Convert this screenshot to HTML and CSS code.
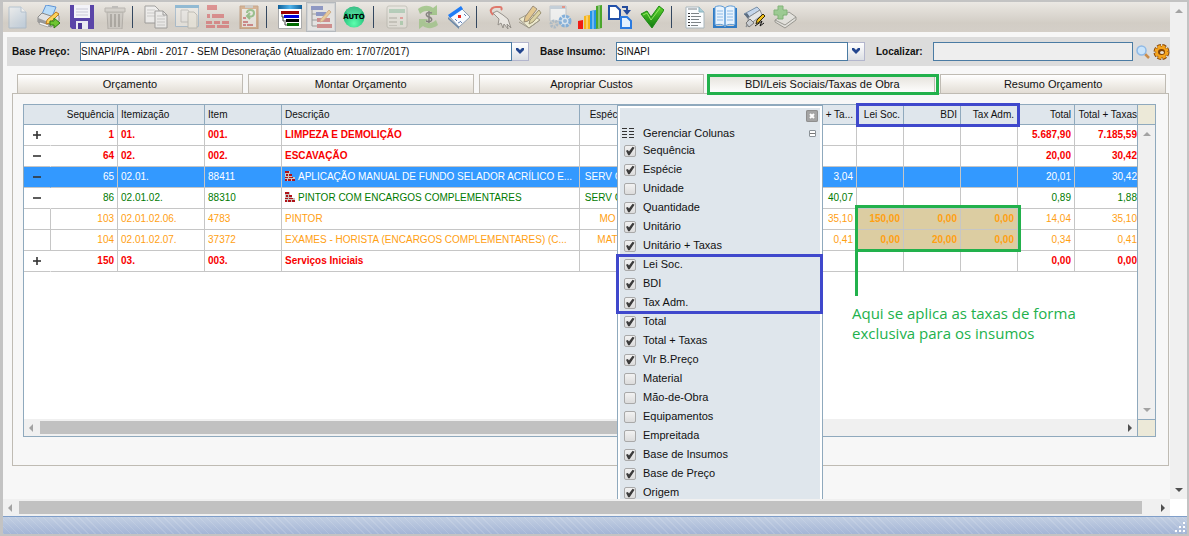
FILE: index.html
```html
<!DOCTYPE html>
<html lang="pt-BR">
<head>
<meta charset="utf-8">
<title>Orçamento - BDI/Leis Sociais/Taxas de Obra</title>
<link rel="stylesheet" href="styles.css">
</head>
<body>
<svg class="defs" width="0" height="0" aria-hidden="true">
  <defs>
    <linearGradient id="gPage" x1="0" y1="0" x2="1" y2="1"><stop offset="0" stop-color="#f2f7fc"/><stop offset="1" stop-color="#a9c8ea"/></linearGradient>
    <radialGradient id="gAuto" cx=".5" cy=".8" r=".7"><stop offset="0" stop-color="#5dffae"/><stop offset="1" stop-color="#16ad6c"/></radialGradient>
    <linearGradient id="gCheck" x1="0" y1="0" x2="0" y2="1"><stop offset="0" stop-color="#5fd52c"/><stop offset="1" stop-color="#0f7a10"/></linearGradient>
    <linearGradient id="gSky" x1="0" y1="0" x2="1" y2="0"><stop offset="0" stop-color="#0f5f97"/><stop offset=".5" stop-color="#52b5ec"/><stop offset="1" stop-color="#0f5f97"/></linearGradient>
    <symbol id="bricks" viewBox="0 0 10 10">
      <path fill="#c9c3c0" d="M0 0h5v3h2v3h3v4H0z"/>
      <path fill="#b01218" d="M0 0h4v2H0zM1 3h2v2H1zM4 3h3v2H4zM0 6h3v1H0zM4 6h4v1H4zM0 8h2v2H0zM3 8h3v2H3zM7 8h3v2H7z"/>
    </symbol>
  </defs>
</svg>
<div class="window">
  <div class="viewport">
    <main class="page">
      <div class="toolbar" role="toolbar" aria-label="Ferramentas">
        <div class="tool-group">
          <button class="tool faded" aria-label="Novo"><svg viewBox="0 0 24 24"><path d="M3 2h12l5 5v16H3z" fill="url(#gPage)" stroke="#8aa9c6"/><path d="M15 2v5h5" fill="#fff" stroke="#8aa9c6"/></svg></button>
          <button class="tool" aria-label="Imprimir"><svg viewBox="0 0 24 24"><path d="M9 0l10 2-4 10-10-3z" fill="#b9dcf8" stroke="#5f95d6"/><path d="M1 12l4-4 12 4 3-3 2 2v5l-8 6L1 17z" fill="#e2e2e2" stroke="#8a8a8a"/><path d="M1 13l13 5v4L1 17z" fill="#9b9b9b"/><path d="M3 17l9 3-1 2-9-3z" fill="#f5f5f5" stroke="#777" stroke-width=".5"/><path d="M19 7l3 2-9 9-4 1 1-4z" fill="#fbd35c" stroke="#c07a1d"/><path d="M13 16h4v-3l6 5-6 5v-3h-4z" fill="#6ec531" stroke="#2f7d12"/></svg></button>
          <button class="tool wide" aria-label="Salvar"><svg viewBox="0 0 24 24"><path d="M0 0h24v24H2l-2-2z" fill="#5a45a8"/><path d="M4 0h16v13H4z" fill="#f3f3f8"/><path d="M6 4h12M6 7h12M6 10h12" stroke="#c9c9d6"/><path d="M6 16h12v8H6z" fill="#e9e9f2"/><path d="M8 18h4v6H8z" fill="#4a3697"/></svg></button>
          <button class="tool faded" aria-label="Excluir"><svg viewBox="0 0 24 24"><path d="M4 7h16l-1 17H5z" fill="#c3c0bb" stroke="#908d88"/><path d="M8 9v13M12 9v13M16 9v13" stroke="#84817c" stroke-width="2"/><path d="M2 3h20v4H2z" fill="#c8c5c0" stroke="#908d88"/><path d="M9 1h6v2H9z" fill="#999"/></svg></button>
        </div>
        <span class="sep"></span>
        <div class="tool-group">
          <button class="tool soft" aria-label="Copiar"><svg viewBox="0 0 24 24"><path d="M1 1h10l4 4v13H1z" fill="#f2f2f2" stroke="#8b8b8b"/><path d="M3 5h8M3 8h9M3 11h9" stroke="#c5c5c5"/><path d="M11 6h8l4 4v13H11z" fill="#f0f0f0" stroke="#8b8b8b"/><path d="M13 11h8M13 14h8M13 17h8M13 20h8" stroke="#c2c2c2"/><path d="M19 6v4h4" fill="none" stroke="#888"/></svg></button>
          <button class="tool faded" aria-label="Janela"><svg viewBox="0 0 24 24"><path d="M.5.5h23v21H.5z" fill="#f1f0ec" stroke="#7fa6c8"/><path d="M0 0h24v3H0z" fill="#3f93cb"/><path d="M6 5h7l2 3v9H6z" fill="#eee" stroke="#aaa"/><path d="M13 7h6l3 3v13h-9z" fill="#f1efe4" stroke="#a3a39b"/></svg></button>
          <button class="tool faded" aria-label="Composição"><svg viewBox="0 0 24 24"><path d="M1 0h10v5H1zM1 9h3v4H1zM6 9h12v4H6zM0 16h6v3H0zM8 16h6v3H8zM16 16h7v3h-7zM0 20h9v3H0zM11 20h12v3H11z" fill="#d4474c"/></svg></button>
          <button class="tool faded" aria-label="Colar"><svg viewBox="0 0 24 24"><path d="M3 1h18v23H3z" fill="#c98953" stroke="#a46a3c"/><path d="M5 4h14v18H5z" fill="#f4f2ec"/><path d="M8 0h8v3H8z" fill="#b9b9b9"/><path d="M10 8c0-4 7-4 7 0s-4 4-6 3M13 8l-3 3 3 3" fill="none" stroke="#58a74a" stroke-width="2"/><path d="M6 12h3v2H6zM6 16h5v2H6zM6 19h3v2H6zM10 19h6v2h-6z" fill="#c34349"/></svg></button>
        </div>
        <span class="sep"></span>
        <div class="tool-group">
          <button class="tool" aria-label="Árvore"><svg viewBox="0 0 24 24"><path d="M.5 2h23v21.500H.5z" fill="#fff" stroke="#aaa"/><path d="M0 0h24v4H0z" fill="url(#gSky)"/><path d="M3 6h18v3H3z" fill="#9b0000"/><path d="M6 10h15v3H6z" fill="#0002d8"/><path d="M8 14h13v3H8z" fill="#000"/><path d="M9 18h12v3H9z" fill="#006b00"/><path d="M4 9v3h2M5 12v4h3M7 17v3h2" fill="none" stroke="#444"/></svg></button>
          <button class="tool pressed" aria-label="Editar itens"><svg class="faded-art" viewBox="0 0 24 24"><path d="M2 1h12v4H2z" fill="#3b50a8"/><path d="M7 7h10v4H7z" fill="#3b50a8"/><path d="M8 13h13v4H8zM8 19h15v4H8z" fill="#ba3d3d"/><path d="M3 5v16h5M3 9h4M3 15h5" fill="none" stroke="#555"/><path d="M20 5l2 2-8 9-3 1 1-3z" fill="#f0b659" stroke="#bd7d39"/></svg></button>
          <button class="tool wide" aria-label="Automático"><svg viewBox="0 0 24 24"><circle cx="12" cy="12" r="10.500" fill="url(#gAuto)"/><ellipse cx="12" cy="6" rx="8" ry="4" fill="#8cf3c5" opacity=".35"/></svg><span class="auto">AUTO</span></button>
        </div>
        <span class="sep"></span>
        <div class="tool-group">
          <button class="tool faded" aria-label="Calculadora"><svg viewBox="0 0 24 24"><rect x="2" y="1" width="20" height="22" rx="2" fill="#e8e8e1" stroke="#a8a89e"/><path d="M4 4h16v4H4z" fill="#8cbf9f"/><path d="M4 12h8v2H4zM4 16h8v2H4zM4 20h8v1H4z" fill="#b6b6ad"/><path d="M15 12h3v2h-3z" fill="#e36c6c"/><path d="M15 16h3v4h-3z" fill="#8fc79a"/></svg></button>
          <button class="tool faded" aria-label="Valores"><svg viewBox="0 0 24 24"><path d="M2 4c5-4 11-4 15-1l4-3v10H12l3-3C11 5 7 6 4 9z" fill="#6fb24e"/><path d="M22 20c-5 4-11 4-15 1l-4 3V14h9l-3 3c4 2 8 1 11-2z" fill="#80bc62"/><path d="M16 8c-7-2-7 3-3 4s4 6-3 4M13 6v12" fill="none" stroke="#333" stroke-width="1.500"/></svg></button>
          <button class="tool" aria-label="Calendário"><svg viewBox="0 0 24 24"><path d="M2 11L14 3l9 9-11 10z" fill="#f8fbff" stroke="#8f9fb3"/><path d="M1 10L14 1l2 3L3 13z" fill="#1f7cf6"/><path d="M1 12l11 10v2L1 14z" fill="#6987a8"/><path d="M11 10h3v3h-3z" fill="#ec2720"/><path d="M8 14l2 2M13 16l2 2M17 9l2 2M11 18l2-1" stroke="#6380b5"/></svg></button>
        </div>
        <span class="sep"></span>
        <div class="tool-group tight">
          <button class="tool soft" aria-label="Selecionar"><svg viewBox="0 0 24 24"><path d="M5 8l4-2 6 4 5 4 3 9-4-4 1 5-4-5-1 4-2-5-3 2 1-6z" fill="#f0eeea" stroke="#817d77"/><path d="M5 10L3 7c-1-3 2-5 5-5h4c2 0 2 2 1 3" fill="none" stroke="#dd5648" stroke-width="2"/></svg></button>
          <button class="tool soft" aria-label="Anotar"><svg viewBox="0 0 24 24"><path d="M1 14l11-6 10 7-11 8z" fill="#f4f1cf" stroke="#8e8a75"/><path d="M1 17l10 6 11-8" fill="none" stroke="#8e8a75"/><path d="M15 1l4 3-9 12-4 1 1-5z" fill="#e5c27a" stroke="#84735a"/><path d="M21 5l2 3-8 9-4 2 1-4z" fill="#ded397" stroke="#867b52"/></svg></button>
          <button class="tool soft" aria-label="Configurar"><svg viewBox="0 0 24 24"><path d="M2 1h16v15H2z" fill="#f4f6f7" stroke="#b6bdc4"/><path d="M2 1h16v3H2z" fill="#bac9d7"/><path d="M14 1h3v2h-3z" fill="#e27b6b"/><circle cx="17" cy="16" r="5" fill="#dcebf9" stroke="#68a4de" stroke-width="3" stroke-dasharray="3 1"/><circle cx="17" cy="16" r="2" fill="#7aaee0"/><circle cx="6" cy="19" r="3" fill="none" stroke="#9fb3c4" stroke-width="3" stroke-dasharray="2 1"/></svg></button>
          <button class="tool" aria-label="Gráfico"><svg viewBox="0 0 24 24"><path d="M0 16l5-1v9H0z" fill="#f01c13"/><path d="M6 11l6-1v14H6z" fill="#f7b51a"/><path d="M12 6l6-1v19h-6z" fill="#2594e8"/><path d="M18 1l6-1v23l-6 1z" fill="#4ba62c"/><path d="M8 11h2v13H8zM14 6h2v18h-2zM20 1h2v22h-2z" fill="#fff" opacity=".35"/></svg></button>
          <button class="tool" aria-label="Transferir"><svg viewBox="0 0 24 24"><path d="M1 1h7l4 4v9H1z" fill="#fff" stroke="#2150a9" stroke-width="2"/><path d="M13 12h6l4 4v7H13z" fill="#e4f1ff" stroke="#2b7be0" stroke-width="2"/><path d="M14 2h5v4" fill="none" stroke="#254c9c" stroke-width="2"/><path d="M15 5h8l-4 5z" fill="#254c9c"/></svg></button>
          <button class="tool wide" aria-label="Confirmar"><svg viewBox="0 0 24 24"><path d="M1 9l6-3 4 6 8-11 5 4-12 18z" fill="url(#gCheck)" stroke="#1d8b14"/><path d="M3 10l4-2 4 7 9-12" fill="none" stroke="#8fe75f"/></svg></button>
        </div>
        <span class="sep"></span>
        <div class="tool-group tight">
          <button class="tool" aria-label="Relatório"><svg viewBox="0 0 24 24"><path d="M3 2h13l5 5v16H3z" fill="#fbfdff" stroke="#a9b6bd"/><path d="M5 4h9M8 8.500h8M8 11.500h10M8 14.500h8M8 17.500h10M8 20.500h7" stroke="#7d8488"/><path d="M5 8.500h2M5 11.500h2M5 14.500h2M5 17.500h2M5 20.500h2" stroke="#333"/><path d="M16 2v5h5" fill="#a6cdd8" stroke="#8ab1bc"/></svg></button>
          <button class="tool" aria-label="Livro"><svg viewBox="0 0 24 24"><path d="M0 3h3v18h8l1 1 1-1h8V3h3v20H0z" fill="#2f7bc5"/><path d="M2 2c4-2 8-1 10 1v18c-3-2-6-2-10-1zM22 2c-4-2-8-1-10 1v18c3-2 6-2 10-1z" fill="#e8f3fd" stroke="#5b9ad7"/><path d="M4 6h6M4 9h6M4 12h6M4 15h6M14 6h6M14 9h6M14 12h6M14 15h6" stroke="#8dbbe8"/></svg></button>
          <button class="tool" aria-label="Assinar"><svg viewBox="0 0 24 24"><path d="M1 9L14 2l3 3L6 12z" fill="#c4d6ec" stroke="#7890a8"/><path d="M1 9l3-1 3 4-2 2z" fill="#5c6d80"/><path d="M6 12l11-7 2 5-12 9-4 3z" fill="#e3e5e7" stroke="#8a8f94"/><path d="M3 18l4-4 4 4-5 4z" fill="#c9cdd1" stroke="#777"/><path d="M20 9l2 2-6 6-3 2 1-4z" fill="#f2c21d" stroke="#382c04"/><path d="M12 21l7-5-2 5 4-3" fill="none" stroke="#111"/></svg></button>
          <button class="tool soft" aria-label="Adicionar"><svg viewBox="0 0 24 24"><path d="M2 15L16 7l7 5v3l-11 8-10-6z" fill="#e6e6e2" stroke="#85857f"/><path d="M2 15l10 5 11-8" fill="none" stroke="#85857f"/><path d="M5 1h5v4h4v5h-4v4H5v-4H1V5h4z" fill="#86c57d" stroke="#62a65b"/></svg></button>
        </div>
      </div>

      <form class="filters">
        <label for="base-preco">Base Preço:</label>
        <div class="combo"><select id="base-preco"><option>SINAPI/PA - Abril - 2017 - SEM Desoneração (Atualizado em: 17/07/2017)</option></select><span class="combo-arrow"><svg viewBox="0 0 10 7"><path d="M1 0h2l2 2 2-2h2v2L5 6 1 2z" fill="#23468f"/></svg></span></div>
        <label class="next" for="base-insumo">Base Insumo:</label>
        <div class="combo"><select id="base-insumo"><option>SINAPI</option></select><span class="combo-arrow"><svg viewBox="0 0 10 7"><path d="M1 0h2l2 2 2-2h2v2L5 6 1 2z" fill="#23468f"/></svg></span></div>
        <label class="next" for="localizar">Localizar:</label>
        <input class="search" id="localizar" type="text">
        <div class="search-tools">
          <button type="button" aria-label="Pesquisar"><svg width="14" height="14" viewBox="0 0 14 14"><path d="M9 9l4 4" stroke="#c98d4c" stroke-width="2.500"/><circle cx="5.500" cy="5.500" r="4.500" fill="#c9e4fb" stroke="#8fb9e6" stroke-width="1.500"/></svg></button>
          <button type="button" aria-label="Opções"><svg width="17" height="16" viewBox="0 0 17 16"><circle cx="8.500" cy="8" r="6" fill="#8b4808" stroke="#8b4808" stroke-width="4" stroke-dasharray="3.500 1.212"/><circle cx="8.500" cy="8" r="5.500" fill="#f5a51f" stroke="#f5a51f" stroke-width="3" stroke-dasharray="2.800 1.520"/><ellipse cx="8.500" cy="8" rx="3.500" ry="3" fill="#804207"/><ellipse cx="9" cy="8.500" rx="2" ry="1.500" fill="#e9e1d2"/></svg></button>
        </div>
      </form>

      <nav class="tabs">
        <button class="tab">Orçamento</button>
        <button class="tab">Montar Orçamento</button>
        <button class="tab">Apropriar Custos</button>
        <button class="tab active">BDI/Leis Sociais/Taxas de Obra</button>
        <button class="tab">Resumo Orçamento</button>
      </nav>

      <section class="panel">
        <div class="grid-frame">
          <div class="grid-body">
            <table class="grid">
              <colgroup><col class="c-exp"><col class="c-seq"><col class="c-itemz"><col class="c-item"><col><col class="c-esp"><col class="c-qtd"><col class="c-unit"><col class="c-unit"><col class="c-lei"><col class="c-num"><col class="c-num"><col class="c-num"><col class="c-tot"></colgroup>
              <thead>
                <tr><th class="r" colspan="2">Sequência</th><th>Itemização</th><th>Item</th><th>Descrição</th><th class="c">Espécie</th><th class="r">Quantidade</th><th class="r">Unitário</th><th class="r">Unitário + Ta...</th><th class="r">Lei Soc.</th><th class="r">BDI</th><th class="r">Tax Adm.</th><th class="r">Total</th><th class="r last">Total + Taxas</th></tr>
              </thead>
              <tbody>
                <tr class="group"><td class="exp"><i class="plus"></i></td><td class="r">1</td><td>01.</td><td>001.</td><td>LIMPEZA E DEMOLIÇÃO</td><td></td><td></td><td></td><td></td><td></td><td></td><td></td><td class="r">5.687,90</td><td class="r last">7.185,59</td></tr>
                <tr class="group"><td class="exp"><i class="minus"></i></td><td class="r">64</td><td>02.</td><td>002.</td><td>ESCAVAÇÃO</td><td></td><td></td><td></td><td></td><td></td><td></td><td></td><td class="r">20,00</td><td class="r last">30,42</td></tr>
                <tr class="selected"><td class="exp"><i class="minus"></i></td><td class="r">65</td><td>02.01.</td><td>88411</td><td><svg class="brick"><use href="#bricks"/></svg>APLICAÇÃO MANUAL DE FUNDO SELADOR ACRÍLICO E...</td><td class="c">SERV C...</td><td></td><td></td><td class="r">3,04</td><td></td><td></td><td></td><td class="r">20,01</td><td class="r last">30,42</td></tr>
                <tr class="service"><td class="exp"><i class="minus"></i></td><td class="r">86</td><td>02.01.02.</td><td>88310</td><td><svg class="brick"><use href="#bricks"/></svg>PINTOR COM ENCARGOS COMPLEMENTARES</td><td class="c">SERV C...</td><td></td><td></td><td class="r">40,07</td><td></td><td></td><td></td><td class="r">0,89</td><td class="r last">1,88</td></tr>
                <tr class="input"><td></td><td class="r">103</td><td>02.01.02.06.</td><td>4783</td><td>PINTOR</td><td class="c">MO</td><td></td><td></td><td class="r">35,10</td><td class="r tax">150,00</td><td class="r tax">0,00</td><td class="r tax">0,00</td><td class="r">14,04</td><td class="r last">35,10</td></tr>
                <tr class="input"><td></td><td class="r">104</td><td>02.01.02.07.</td><td>37372</td><td>EXAMES - HORISTA (ENCARGOS COMPLEMENTARES) (C...</td><td class="c">MAT</td><td></td><td></td><td class="r">0,41</td><td class="r tax">0,00</td><td class="r tax">20,00</td><td class="r tax">0,00</td><td class="r">0,34</td><td class="r last">0,41</td></tr>
                <tr class="group"><td class="exp"><i class="plus"></i></td><td class="r">150</td><td>03.</td><td>003.</td><td>Serviços Iniciais</td><td></td><td></td><td></td><td></td><td></td><td></td><td></td><td class="r">0,00</td><td class="r last">0,00</td></tr>
              </tbody>
            </table>
          </div>
          <div class="side">
            <div class="side-head"></div>
            <div class="vscroll idle"><i class="arrow up"></i><i class="arrow down"></i></div>
          </div>
          <div class="hscroll"><i class="arrow left"></i><div class="track"><div class="thumb grid-thumb"></div></div><i class="arrow right"></i></div>
          <div class="side-foot"></div>

          <div class="mark mark-head"></div>
          <div class="mark mark-tax"></div>
          <div class="mark-line"></div>
          <p class="note">Aqui se aplica as taxas de forma exclusiva para os insumos</p>

          <div class="menu">
            <div class="menu-top"><button class="close" aria-label="Fechar"><svg viewBox="0 0 12 12"><path d="M4 4l4 4M8 4l-4 4" stroke="#fff" stroke-width="2"/></svg></button></div>
            <div class="menu-title">
              <svg width="13" height="10" viewBox="0 0 13 10"><path d="M0 .5h5M0 3.500h5M0 6.500h5M0 9.500h5M7 .5h5M7 3.500h5M7 6.500h5M7 9.500h5" stroke="#333"/></svg>
              <span>Gerenciar Colunas</span>
              <button class="collapse" aria-label="Recolher"></button>
            </div>
            <label><input type="checkbox" checked>Sequência</label>
            <label><input type="checkbox" checked>Espécie</label>
            <label><input type="checkbox">Unidade</label>
            <label><input type="checkbox" checked>Quantidade</label>
            <label><input type="checkbox" checked>Unitário</label>
            <label><input type="checkbox" checked>Unitário + Taxas</label>
            <div class="marked">
              <label><input type="checkbox" checked>Lei Soc.</label>
              <label><input type="checkbox" checked>BDI</label>
              <label><input type="checkbox" checked>Tax Adm.</label>
            </div>
            <label><input type="checkbox" checked>Total</label>
            <label><input type="checkbox" checked>Total + Taxas</label>
            <label><input type="checkbox" checked>Vlr B.Preço</label>
            <label><input type="checkbox">Material</label>
            <label><input type="checkbox">Mão-de-Obra</label>
            <label><input type="checkbox">Equipamentos</label>
            <label><input type="checkbox">Empreitada</label>
            <label><input type="checkbox" checked>Base de Insumos</label>
            <label><input type="checkbox" checked>Base de Preço</label>
            <label><input type="checkbox" checked>Origem</label>
          </div>
        </div>
      </section>
    </main>
    <div class="vscroll outer"><i class="arrow up pale"></i><i class="arrow down"></i></div>
  </div>
  <div class="bottom-scroll">
    <div class="hscroll"><i class="arrow left"></i><div class="track"><div class="thumb page-thumb"></div></div><i class="arrow right"></i></div>
    <div class="corner"></div>
  </div>
  <footer class="status">
    <svg width="10" height="10" viewBox="0 0 10 10"><path d="M8 0h2v2H8zM4 4h2v2H4zM8 4h2v2H8zM0 8h2v2H0zM4 8h2v2H4zM8 8h2v2H8z" fill="#fff"/></svg>
  </footer>
</div>
</body>
</html>
```
FILE: styles.css
```css
* { box-sizing: border-box; }

body {
  margin: 0;
  font-family: "Liberation Sans", Arial, sans-serif;
  font-size: 10px;
  color: #111;
}

button { font: inherit; color: inherit; border: 0; padding: 0; background: none; }

.defs { position: absolute; }

.window {
  display: flex;
  flex-direction: column;
  height: 100vh;
  border: solid #c3c3c3;
  border-width: 2px 2px 2px 3px;
  background: #f7f7f7;
}

.viewport { display: flex; flex: 1; min-height: 0; }

.page {
  display: flex;
  flex-direction: column;
  flex: 1;
  min-width: 0;
  overflow: hidden;
}

/* Toolbar */
.toolbar {
  display: flex;
  align-items: center;
  height: 30px;
  background: linear-gradient(#ebe8e3, #d2cdc5 70%, #d4cfc8);
}
.tool-group { display: flex; gap: 1px; }
.tool-group.tight { gap: 0; }
.tool {
  position: relative;
  display: flex;
  align-items: center;
  justify-content: center;
  width: 30px;
  height: 30px;
}
.tool svg { width: 24px; height: 24px; }
.tool.wide { width: 34px; }
.tool.faded svg, .faded-art { opacity: .5; }
.tool.soft svg { opacity: .75; }
.tool.pressed { border: 1px solid #b5b9bd; background: #e3e2e0; box-shadow: inset 0 0 0 1px #d2d4d6; }
.auto { position: absolute; left: 0; right: 0; text-align: center; font-size: 7px; font-weight: bold; color: #000; font-family: "DejaVu Sans", sans-serif; }
.sep { width: 1px; height: 22px; margin: 0 8px 0 2px; background: #33475f; }

/* Filters */
.filters {
  display: grid;
  grid-template-columns: 68px 449fr 87px 249fr 68px 200fr 37px;
  align-items: center;
  margin: 5px 0 8px 4px;
  padding: 5px 0 5px 5px;
  background: #dcdcdc;
}
.filters label { font-weight: bold; }
.filters .next { padding-left: 11px; }
.combo { display: flex; }
.combo select, .search {
  flex: 1;
  min-width: 0;
  height: 19px;
  margin: 0;
  padding: 0;
  border: 1px solid #4a7ba3;
  border-radius: 0;
  background: #fff;
  appearance: none;
  font: inherit;
  color: #111;
}
.search { background: #eee; }
.combo-arrow {
  display: flex;
  align-items: center;
  justify-content: center;
  width: 17px;
  border: 1px solid #b3b6cd;
  border-left: 0;
  background: linear-gradient(#fff, #dcdfe4);
}
.combo-arrow svg { width: 10px; height: 7px; }
.search-tools { display: flex; align-items: center; justify-content: space-between; padding-left: 3px; }
.search-tools svg { display: block; }

/* Tabs */
.tabs { display: grid; grid-template-columns: repeat(5, 1fr); gap: 5px; margin: 0 4px 0 14px; }
.tab {
  position: relative;
  height: 19px;
  border: 1px solid #bfbbb3;
  border-bottom: 0;
  background: linear-gradient(#fff, #f1eee9 50%, #e2ddd5);
  font-size: 11px;
  text-align: center;
}
.tab.active { background: linear-gradient(#e4e1da, #fff); }
.tab.active::after { content: ""; position: absolute; inset: -1px -5px -2px -3px; border: 3px solid #22b14c; }

.panel {
  display: flex;
  flex: 1;
  min-height: 0;
  margin: 0 1px 33px 9px;
  padding: 10px 12px 28px 10px;
  border: 1px solid #bfbbb3;
}

/* Data grid */
.grid-frame {
  position: relative;
  display: grid;
  grid-template: 1fr 17px / minmax(0, 1fr) 18px;
  flex: 1;
  min-width: 0;
  border: 1px solid #8fa9bd;
  background: #fff;
}
.grid-body { overflow: hidden; min-height: 0; }
.grid { width: 100%; table-layout: fixed; border-collapse: separate; border-spacing: 0; }
.c-exp { width: 27px; }
.c-seq { width: 67px; }
.c-itemz { width: 87px; }
.c-item { width: 77px; }
.c-esp { width: 56px; }
.c-qtd { width: 65px; }
.c-unit { width: 78px; }
.c-lei { width: 47px; }
.c-num { width: 57px; }
.c-tot { width: 62px; }
.grid th, .grid td {
  height: 21px;
  padding: 0 3px;
  border: solid #c6c6c6;
  border-width: 0 1px 1px 0;
  font-weight: normal;
  line-height: 12px;
  text-align: left;
  white-space: nowrap;
  overflow: hidden;
  text-overflow: ellipsis;
}
.grid th { height: 20px; background: #dfe6ec; border-color: #8fa9bd; }
.grid .r { text-align: right; }
.grid .c { text-align: center; }
.grid .last { padding: 0; border-right: 0; text-overflow: clip; }
.grid .exp { border-right-color: transparent; text-align: center; }
.group { color: #f80000; }
.grid .group td { font-weight: bold; }
.selected { color: #fff; background: #3399ff; }
.service { color: #007a00; }
.input { color: #ffa012; }
.grid .tax { background: #dccda2; font-weight: bold; }
.brick { width: 10px; height: 10px; margin-right: 3px; vertical-align: -1px; }
.plus, .minus { position: relative; display: inline-block; width: 8px; height: 8px; vertical-align: middle; }
.plus::before, .minus::before { content: ""; position: absolute; top: 3px; left: 0; width: 8px; height: 2px; background: #333; opacity: .8; }
.plus::after { content: ""; position: absolute; top: 0; left: 3px; width: 2px; height: 8px; background: #333; opacity: .8; }

.side { display: flex; flex-direction: column; border-left: 1px solid #8fa9bd; }
.side-head { height: 20px; background: #ece9d8; border-bottom: 1px solid #8fa9bd; }
.side-foot { background: #ece9d8; border: solid #8fa9bd; border-width: 1px 0 0 1px; }

/* Scroll bars */
.vscroll {
  display: flex;
  flex-direction: column;
  align-items: center;
  justify-content: space-between;
  flex: 1;
  padding: 7px 0;
  background: #f0f0f0;
}
.vscroll.outer { flex: 0 0 17px; }
.hscroll { display: flex; align-items: center; flex: 1; min-width: 0; height: 17px; padding: 0 5px; background: #f0f0f0; }
.track { flex: 1; min-width: 0; margin: 0 8px 0 7px; }
.thumb { height: 13px; background: #c1c1c1; }
.grid-thumb { width: 64%; }
.page-thumb { width: 99%; }
.arrow { border: 4px solid transparent; }
.arrow.up { border-top: 0; border-bottom-color: #505050; }
.arrow.down { border-bottom: 0; border-top-color: #505050; }
.arrow.left { border-left: 0; border-right-color: #a3a3a3; }
.arrow.right { border-right: 0; border-left-color: #505050; }
.arrow.pale, .idle .arrow.up { border-bottom-color: #a3a3a3; }
.idle .arrow.down { border-top-color: #a3a3a3; }

.bottom-scroll { display: flex; }
.corner { width: 17px; background: #fff; }

/* Call-outs over the grid */
.mark { position: absolute; border: 3px solid #3f48cc; }
.mark-head { top: -2px; right: 135px; width: 164px; height: 24px; }
.mark-tax { top: 100px; right: 134px; width: 166px; height: 47px; border-color: #22b14c; }
.mark-line { position: absolute; top: 147px; right: 297px; width: 3px; height: 44px; background: #22b14c; }
.note {
  position: absolute;
  top: 198px;
  right: 68px;
  width: 235px;
  margin: 0;
  font: 15px/20px "Open Sans", sans-serif;
  color: #22b14c;
}

/* Column menu */
.menu {
  position: absolute;
  top: 0;
  right: 332px;
  width: 206px;
  border: 1px solid #8fa9bd;
  outline: 2px solid #fff;
  outline-offset: -3px;
  padding: 2px;
  background: #dfe6ec;
  font-size: 11px;
}
.menu-top { display: flex; justify-content: flex-end; height: 17px; padding: 2px 2px 0 0; }
.close { width: 12px; height: 12px; border-radius: 2px; background: #a4a4a4; box-shadow: 0 0 0 1px #8e8e8e inset; }
.close svg { display: block; }
.menu-title { display: flex; align-items: center; height: 16px; padding: 0 4px 0 2px; }
.menu-title span { flex: 1; margin-left: 8px; }
.collapse { width: 7px; height: 7px; border: 1px solid #8b9298; border-radius: 1px; background: linear-gradient(#fff 0 2px, #777 2px 3px, #fff 3px); }
.menu label { display: flex; align-items: center; height: 19px; padding-left: 4px; line-height: 19px; }
.menu input {
  flex: none;
  width: 12px;
  height: 12px;
  margin: 1px 7px 0 0;
  border: 1px solid #a9a9a9;
  border-radius: 2px;
  background: linear-gradient(#f2f2f2, #dcdcdc);
  appearance: none;
}
.menu input:checked::before {
  content: "";
  display: block;
  width: 10px;
  height: 10px;
  background: #3c3c3c;
  clip-path: polygon(10% 48%, 28% 40%, 40% 56%, 76% 8%, 96% 18%, 46% 92%, 32% 92%);
}
.marked { position: relative; }
.marked::after { content: ""; position: absolute; inset: -1px -3px -2px -4px; border: 3px solid #3f48cc; pointer-events: none; }

/* Status bar */
.status {
  display: flex;
  align-items: flex-end;
  justify-content: flex-end;
  height: 18px;
  padding: 0 2px 2px;
  border-top: 1px solid #7f9ec9;
  background:
    repeating-linear-gradient(45deg, rgba(255, 255, 255, .12) 0 1px, transparent 1px 5px),
    linear-gradient(#c2cfe2, #a4b5d6);
}
```
